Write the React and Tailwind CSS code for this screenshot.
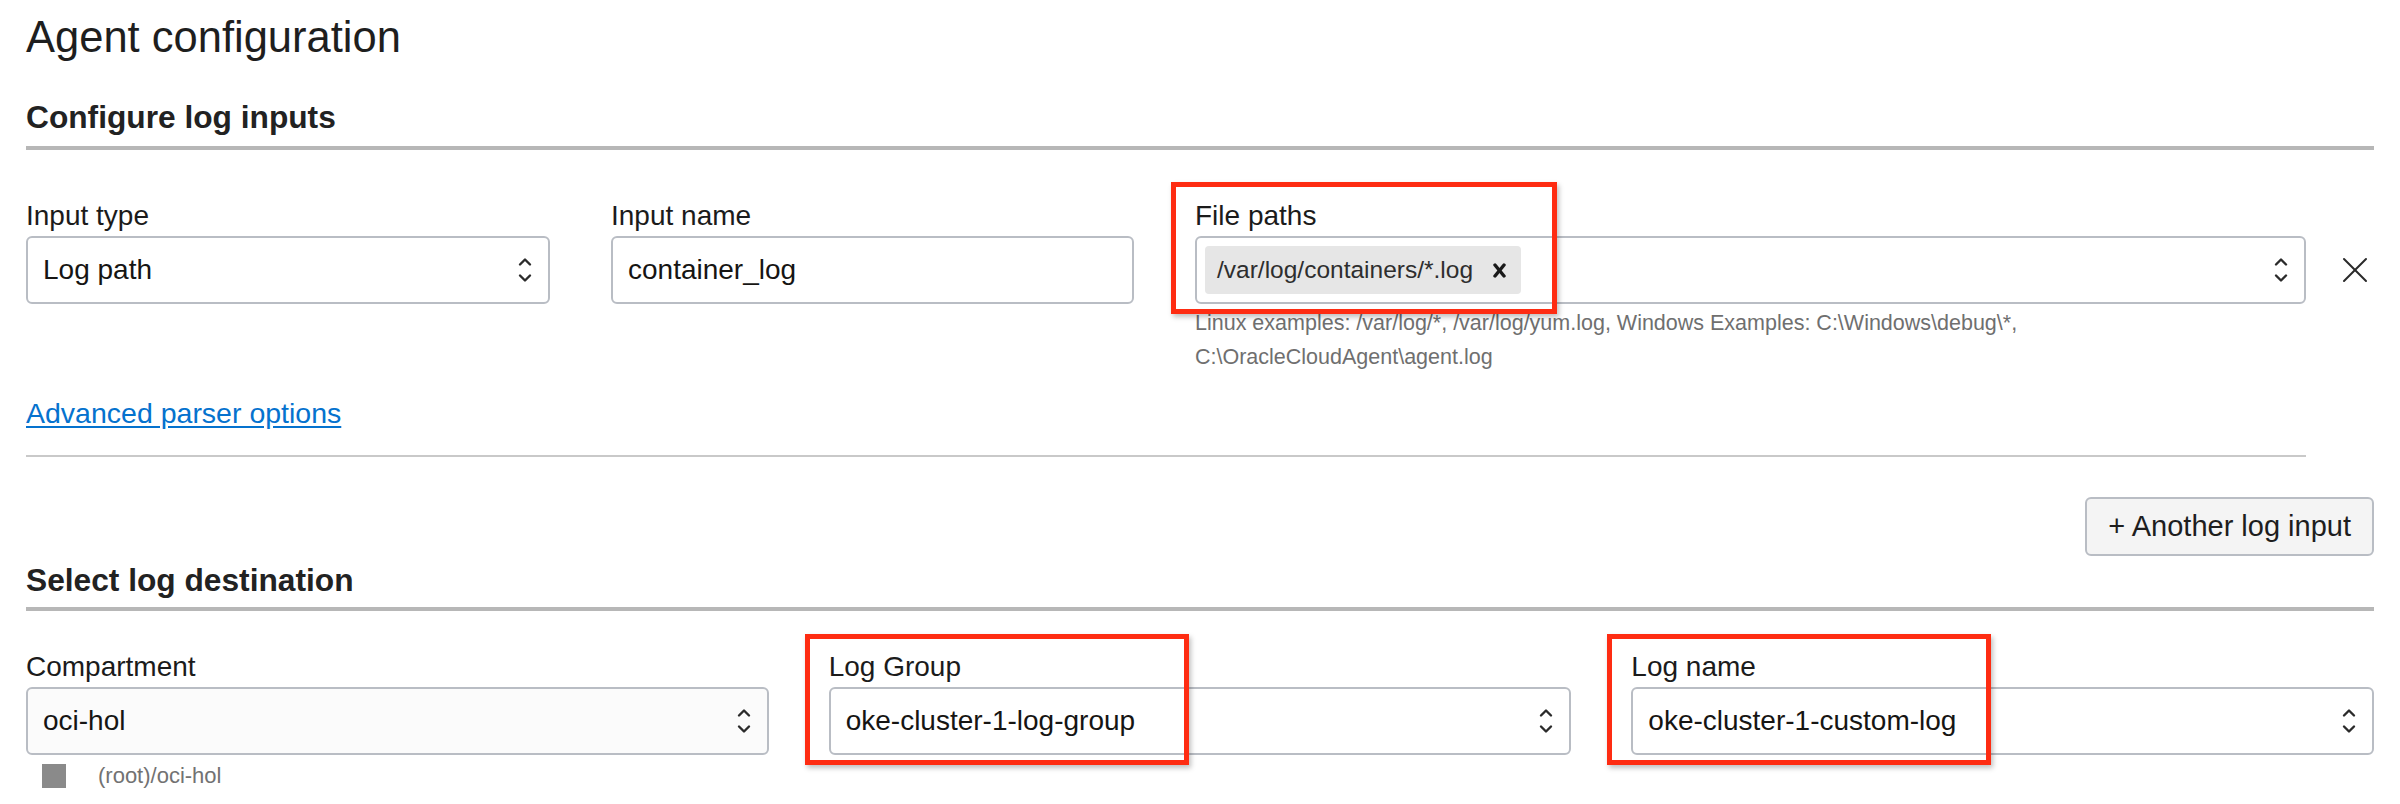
import React from 'react';

function Chevrons() {
  return (
    <svg width="14" height="28" viewBox="0 0 14 28" fill="none" stroke="#2b2b2b" strokeWidth="2.4" strokeLinecap="round" strokeLinejoin="round">
      <polyline points="2,8.5 7,3.5 12,8.5" />
      <polyline points="2,19.5 7,24.5 12,19.5" />
    </svg>
  );
}

function SelectBox({ value, gray }) {
  return (
    <div className={`flex h-[68px] items-center justify-between rounded-[6px] border-2 border-[#b9bdc4] pl-[15px] pr-[16px] ${gray ? 'bg-[#fbfbfb]' : 'bg-white'}`}>
      <span className="text-[28px] leading-[32px]">{value}</span>
      <Chevrons />
    </div>
  );
}

function Label({ children }) {
  return <div className="mb-[4px] text-[28px] leading-[32px] text-[#1b1b1b]">{children}</div>;
}

export default function App() {
  return (
    <div className="relative min-h-[804px] bg-white px-[26px] pt-[11px] font-['Liberation_Sans',Arial,sans-serif] text-[#161513]">
      <h1 className="text-[43.5px] leading-[52px] text-[#1e1e1e]">Agent configuration</h1>

      <h2 className="mt-[34px] text-[31.7px] font-bold leading-[40px] text-[#222]">Configure log inputs</h2>
      <div className="mt-[9px] h-[4px] bg-[#b7b7b7]" />

      <div className="mt-[50px] flex">
        <div className="flex-1">
          <div className="grid grid-cols-[524px_523px_1fr] gap-x-[61px]">
            <div>
              <Label>Input type</Label>
              <SelectBox value="Log path" />
            </div>
            <div>
              <Label>Input name</Label>
              <div className="flex h-[68px] items-center rounded-[6px] border-2 border-[#b9bdc4] bg-white pl-[15px]">
                <span className="text-[28px] leading-[32px]">container_log</span>
              </div>
            </div>
            <div>
              <Label>File paths</Label>
              <div className="flex h-[68px] items-center justify-between rounded-[6px] border-2 border-[#b9bdc4] bg-white pl-[8px] pr-[16px]">
                <span className="flex h-[48px] items-center gap-[20px] rounded-[4px] bg-[#e6e6e6] pl-[12px] pr-[15px]">
                  <span className="text-[24.5px] leading-[28px] text-[#2e2e2e]">/var/log/containers/*.log</span>
                  <svg width="13" height="15" viewBox="0 0 13 15" stroke="#1a1a1a" strokeWidth="3.4" strokeLinecap="round">
                    <line x1="2" y1="2" x2="11" y2="13" />
                    <line x1="11" y1="2" x2="2" y2="13" />
                  </svg>
                </span>
                <Chevrons />
              </div>
              <p className="mt-[2px] text-[21.5px] leading-[34px] text-[#6f6f6f]">
                Linux examples: /var/log/*, /var/log/yum.log, Windows Examples: C:\Windows\debug\*,
                <br />
                C:\OracleCloudAgent\agent.log
              </p>
            </div>
          </div>
          <a href="#" className="mt-[22px] inline-block text-[28.5px] leading-[34px] text-[#0572ce] underline underline-offset-[3px]">
            Advanced parser options
          </a>
          <div className="mt-[25px] h-[2px] bg-[#c9c9c9]" />
        </div>
        <div className="flex w-[68px] justify-end pr-[6px] pt-[57px]">
          <svg width="26" height="26" viewBox="0 0 26 26" stroke="#2a2a2a" strokeWidth="2" strokeLinecap="round">
            <line x1="2" y1="2" x2="24" y2="24" />
            <line x1="24" y1="2" x2="2" y2="24" />
          </svg>
        </div>
      </div>

      <div className="mt-[40px] flex justify-end">
        <button type="button" className="h-[59px] rounded-[6px] border-2 border-[#b9bdc4] bg-[#f4f4f4] px-[21px] text-[29px] text-[#1e1e1e]">
          + Another log input
        </button>
      </div>

      <h2 className="mt-[4px] text-[31.7px] font-bold leading-[40px] text-[#222]">Select log destination</h2>
      <div className="mt-[7px] h-[4px] bg-[#b7b7b7]" />

      <div className="mt-[40px] grid grid-cols-3 gap-x-[60px]">
        <div>
          <Label>Compartment</Label>
          <SelectBox value="oci-hol" gray />
          <div className="mt-[7px] flex items-center gap-[32px] pl-[16px]">
            <span className="h-[24px] w-[24px] bg-[#8a8a8a]" />
            <span className="text-[22px] leading-[28px] text-[#727272]">(root)/oci-hol</span>
          </div>
        </div>
        <div>
          <Label>Log Group</Label>
          <SelectBox value="oke-cluster-1-log-group" />
        </div>
        <div>
          <Label>Log name</Label>
          <SelectBox value="oke-cluster-1-custom-log" />
        </div>
      </div>

      <div className="pointer-events-none absolute left-[1171px] top-[182px] h-[132px] w-[386px] border-[5px] border-[#fe2c12] shadow-[2px_3px_5px_rgba(0,0,0,0.25)]" />
      <div className="pointer-events-none absolute left-[805px] top-[634px] h-[131px] w-[384px] border-[5px] border-[#fe2c12] shadow-[2px_3px_5px_rgba(0,0,0,0.25)]" />
      <div className="pointer-events-none absolute left-[1607px] top-[634px] h-[131px] w-[384px] border-[5px] border-[#fe2c12] shadow-[2px_3px_5px_rgba(0,0,0,0.25)]" />
    </div>
  );
}
